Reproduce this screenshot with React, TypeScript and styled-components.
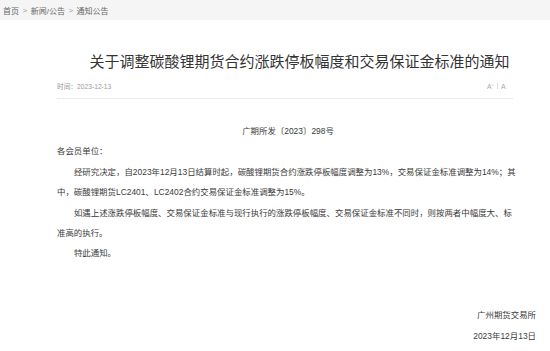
import React from "react";
import styled, { createGlobalStyle } from "styled-components";

const Global = createGlobalStyle`
  html, body { margin: 0; padding: 0; background: #fff; }
  body { font-family: "Liberation Sans", "Noto Sans CJK SC", sans-serif; color: #333; }
`;

const Crumbs = styled.nav`
  height: 20px;
  background: #f5f5f5;
  display: flex;
  align-items: center;
  padding-left: 3px;
  font-size: 8px;
  color: #666;
  gap: 3.5px;
`;

const Sep = styled.span`
  color: #999;
`;

const Article = styled.article`
  margin-left: 57px;
  width: 479px;
`;

const Title = styled.h1`
  margin: 0;
  padding: 31px 0 0 6px;
  text-align: center;
  font-size: 15px;
  line-height: 22px;
  font-weight: normal;
  color: #333;
  white-space: nowrap;
`;

const Meta = styled.div`
  width: 456px;
  display: flex;
  justify-content: space-between;
  align-items: center;
  margin-top: 7px;
  padding-bottom: 6px;
  border-bottom: 1px solid #eaeaea;
  font-size: 6.7px;
  color: #999;
  height: 12px;
`;

const SizeTools = styled.div`
  display: flex;
  align-items: center;
  gap: 3px;
  margin-right: 6px;
  color: #aaa;
  font-size: 7px;
`;

const Bar = styled.span`
  width: 1px;
  height: 6px;
  background: #ddd;
`;

const Sup = styled.sup`
  font-size: 4px;
`;

const Body = styled.div`
  padding: 22px 17px 0 0;
  font-size: 8.44px;
  line-height: 20.4px;
  color: #3a3a3a;
`;

const Para = styled.p<{ $indent?: boolean; $center?: boolean }>`
  margin: 0;
  text-indent: ${(p) => (p.$indent ? "2em" : "0")};
  text-align: ${(p) => (p.$center ? "center" : "left")};
`;

const Signature = styled.div`
  margin-top: 41px;
  text-align: right;
  font-size: 8.44px;
  line-height: 21px;
  color: #3a3a3a;
`;

export default function App() {
  return (
    <>
      <Global />
      <Crumbs>
        <span>首页</span>
        <Sep>&gt;</Sep>
        <span>新闻/公告</span>
        <Sep>&gt;</Sep>
        <span>通知公告</span>
      </Crumbs>
      <Article>
        <Title>关于调整碳酸锂期货合约涨跌停板幅度和交易保证金标准的通知</Title>
        <Meta>
          <span>时间：2023-12-13</span>
          <SizeTools>
            <span>
              A<Sup>+</Sup>
            </span>
            <Bar />
            <span>
              A<Sup>-</Sup>
            </span>
          </SizeTools>
        </Meta>
        <Body>
          <Para $center>广期所发〔2023〕298号</Para>
          <Para>各会员单位：</Para>
          <Para $indent>
            经研究决定，自2023年12月13日结算时起，碳酸锂期货合约涨跌停板幅度调整为13%，交易保证金标准调整为14%；其中，碳酸锂期货LC2401、LC2402合约交易保证金标准调整为15%。
          </Para>
          <Para $indent>
            如遇上述涨跌停板幅度、交易保证金标准与现行执行的涨跌停板幅度、交易保证金标准不同时，则按两者中幅度大、标准高的执行。
          </Para>
          <Para $indent>特此通知。</Para>
        </Body>
        <Signature>
          <div>广州期货交易所</div>
          <div>2023年12月13日</div>
        </Signature>
      </Article>
    </>
  );
}
